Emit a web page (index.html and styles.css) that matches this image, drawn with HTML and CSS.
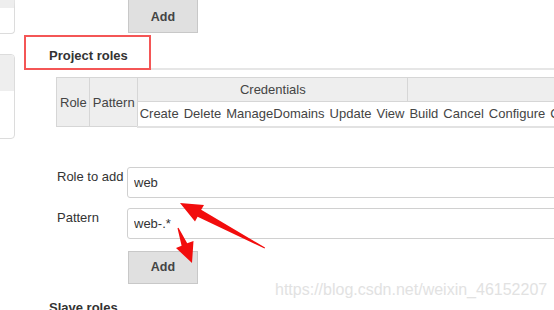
FILE: index.html
```html
<!DOCTYPE html>
<html lang="en">
<head>
    <meta charset="UTF-8">
    <meta name="viewport" content="width=device-width, initial-scale=1.0">
    <title>Manage Roles</title>
    <link rel="stylesheet" href="styles.css">
</head>
<body>
    <div class="page">
        <aside class="side">
            <div class="side-box side-box-top"></div>
            <div class="side-box side-box-menu">
                <div class="side-head"></div>
            </div>
        </aside>

        <main class="main">
            <div class="btn-row btn-row-top">
                <button class="btn">Add</button>
            </div>

            <section class="roles">
                <h2 class="section-title">Project roles</h2>

                <table class="grid">
                    <tr class="group-row">
                        <th rowspan="2">Role</th>
                        <th rowspan="2">Pattern</th>
                        <th colspan="5" class="group">Credentials</th>
                        <th colspan="9" class="group">Job</th>
                    </tr>
                    <tr class="perm-row">
                        <td>Create</td>
                        <td>Delete</td>
                        <td>ManageDomains</td>
                        <td>Update</td>
                        <td>View</td>
                        <td>Build</td>
                        <td>Cancel</td>
                        <td>Configure</td>
                        <td>Create</td>
                        <td>Delete</td>
                        <td>Discover</td>
                        <td>Move</td>
                        <td>Read</td>
                        <td>Workspace</td>
                    </tr>
                </table>

                <div class="add-form">
                    <label class="form-label" for="role-name">Role to add</label>
                    <input class="form-input" id="role-name" type="text" value="web">
                    <label class="form-label" for="role-pattern">Pattern</label>
                    <input class="form-input" id="role-pattern" type="text" value="web-.*">
                </div>

                <div class="btn-row">
                    <button class="btn">Add</button>
                </div>
            </section>

            <h2 class="section-title section-next">Slave roles</h2>
        </main>

        <!-- annotations drawn over the screenshot -->
        <div class="mark-box"></div>
        <svg class="arrows" width="554" height="310" viewBox="0 0 554 310">
            <polygon points="180,203 204,205 201.2,209.8 265,247.5 264.6,248.5 197.6,216.8 195,221.5" />
            <polygon points="192,263 193.5,241 187.2,243.2 178.5,227.8 177.5,228.2 181.6,245.7 176,248" />
        </svg>
        <div class="watermark">https://blog.csdn.net/weixin_46152207</div>
    </div>
</body>
</html>
```

FILE: styles.css
```css
* {
    margin: 0;
    padding: 0;
    box-sizing: border-box;
}

html, body {
    width: 554px;
    height: 310px;
    overflow: hidden;
    background: #fff;
}

body {
    font-family: "Liberation Sans", Arial, Helvetica, sans-serif;
    font-size: 13px;
    color: #333;
}

.page {
    position: relative;
    display: flex;
    width: 554px;
    height: 310px;
    overflow: hidden;
}

/* left side panel, mostly cut off */
.side {
    flex: 0 0 16px;
    display: flex;
    flex-direction: column;
    gap: 20px;
}

.side-box {
    margin-left: -30px;
    width: 45px;
    border: 1px solid #dcdcdc;
    border-radius: 4px;
    background: #fff;
    overflow: hidden;
}

.side-box-top {
    margin-top: -20px;
    height: 54px;
    border-top: 28px solid #eee;
}

.side-box-menu {
    height: 85px;
}

.side-head {
    height: 36px;
    background: #eee;
}

.main {
    flex: 1;
    min-width: 0;
    padding-left: 33px;
}

.btn-row {
    padding-left: 79px;
}

.btn-row-top {
    margin-top: -7px;
}

.btn {
    width: 70px;
    height: 33px;
    background: #e0e0e0;
    border: 1px solid #c8c8c8;
    font-family: "Liberation Sans", Arial, sans-serif;
    font-size: 12.5px;
    font-weight: bold;
    color: #444;
    cursor: pointer;
}

.btn-row-top .btn {
    height: 40px;
    padding-top: 7px;
}

.section-title {
    font-family: "Liberation Sans", Arial, sans-serif;
    font-size: 13px;
    font-weight: bold;
    line-height: 18px;
    color: #333;
    padding-top: 14px;
    padding-bottom: 3px;
    border-bottom: 2px solid #e6e6e6;
}

.section-next {
    padding-top: 15px;
    border-bottom: none;
}

.grid {
    margin: 7px 0 0 7px;
    border-collapse: collapse;
    white-space: nowrap;
    color: #444;
    font-size: 13px;
}

.grid th {
    background: #eee;
    font-weight: normal;
    border: 1px solid #d6d6d6;
    padding: 0 2px 0 3px;
}

.group-row th {
    height: 24px;
}

.grid th.group {
    text-align: center;
}

.perm-row td {
    height: 25px;
    padding: 0 3px 0 2px;
    background: #fff;
    border-top: 1px solid #d6d6d6;
    border-bottom: 2px solid #e2e2e2;
}

.add-form {
    display: grid;
    grid-template-columns: 70px 1fr;
    row-gap: 10px;
    margin: 39px -20px 12px 8px;
}

.form-label {
    line-height: 16px;
    padding-top: 2px;
    color: #333;
}

.form-input {
    height: 31px;
    border: 1px solid #d0d0d0;
    border-radius: 3px;
    padding: 0 6px;
    font-family: "Liberation Sans", Arial, sans-serif;
    font-size: 13px;
    color: #333;
    background: #fff;
}

/* annotations */
.mark-box {
    position: absolute;
    left: 24px;
    top: 35px;
    width: 127px;
    height: 35px;
    border: 2px solid #f45656;
}

.arrows {
    position: absolute;
    left: 0;
    top: 0;
    pointer-events: none;
}

.arrows polygon {
    fill: #f20d0d;
}

.watermark {
    position: absolute;
    left: 275px;
    top: 281px;
    font-size: 16px;
    line-height: 18px;
    color: #e2e2e2;
    white-space: nowrap;
}
```
